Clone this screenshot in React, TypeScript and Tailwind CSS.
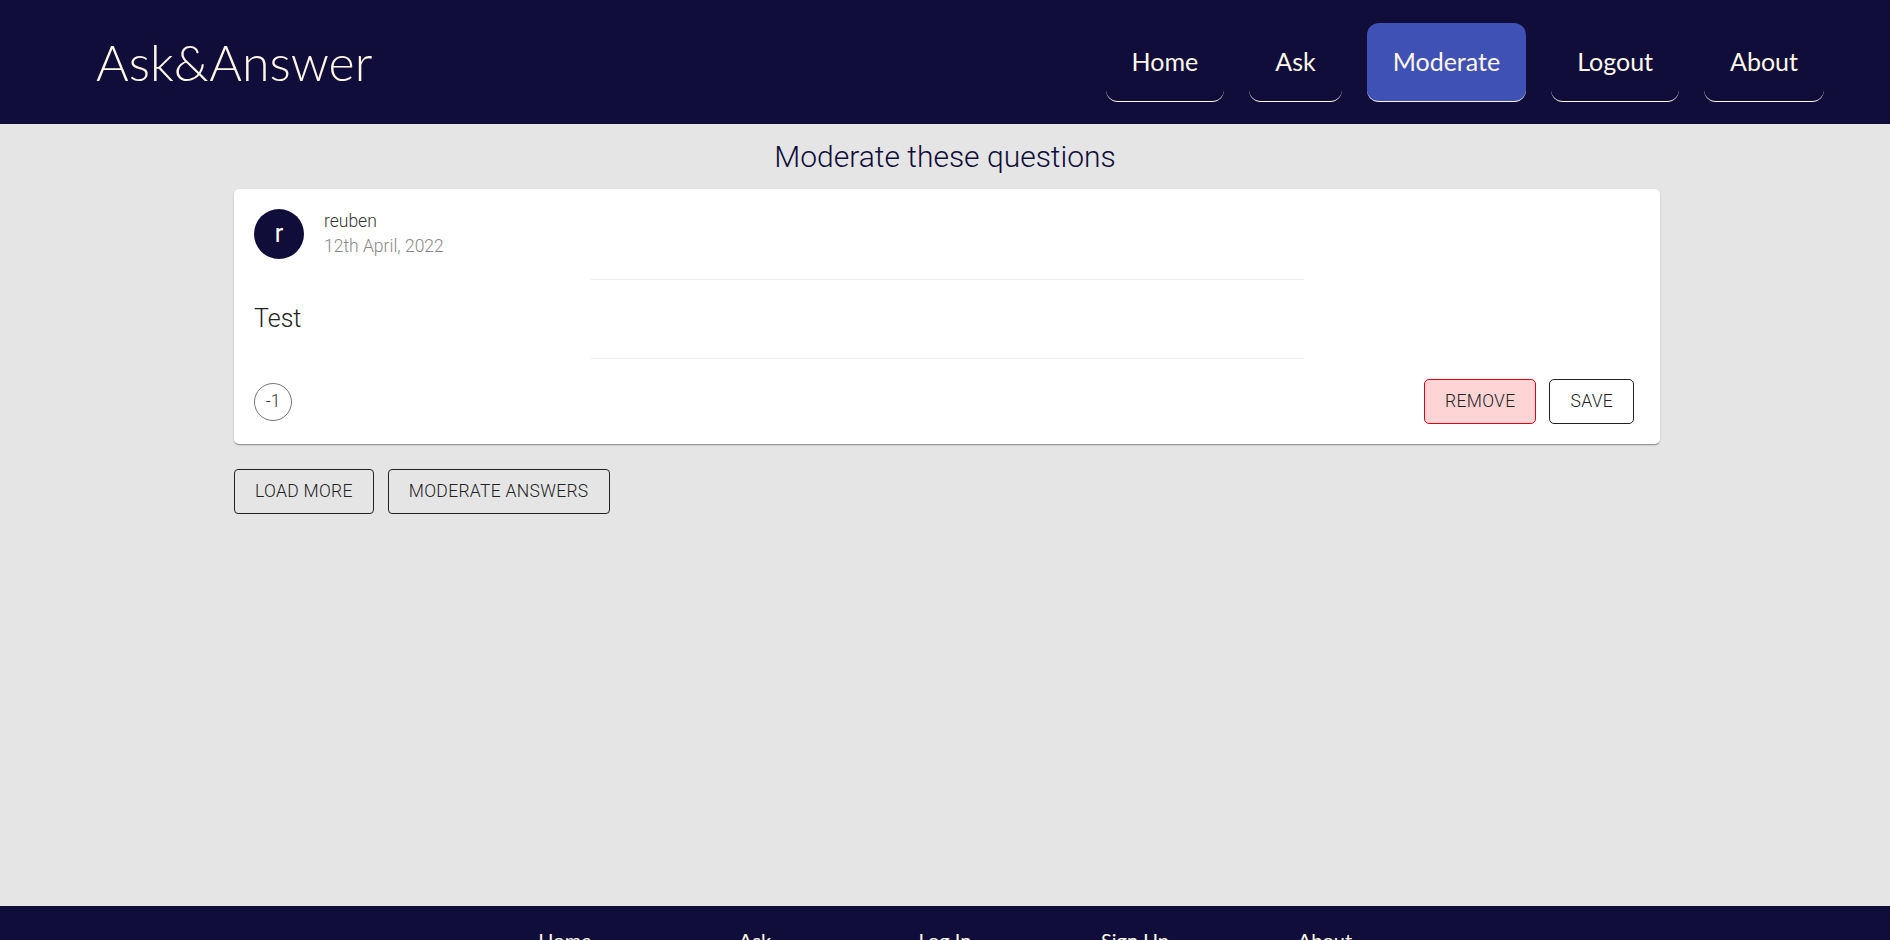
const navItems = ['Home', 'Ask', 'Moderate', 'Logout', 'About']
const footerItems = ['Home', 'Ask', 'Log In', 'Sign Up', 'About']

function Header() {
  return (
    <header className="h-[124px] bg-[#100d3a] flex items-center justify-between pl-[96px] pr-[66px]">
      <div className="text-[50px] font-light text-[#fff8e7] leading-none font-['Lato',sans-serif]">Ask&amp;Answer</div>
      <nav className="flex gap-[25px] mt-[1px]">
        {navItems.map((item) => (
          <a
            key={item}
            className={
              item === 'Moderate'
                ? 'h-[79px] px-[26px] flex items-center rounded-[12px] bg-[#3f51b5] border-b border-[#fff8e7] text-[25px] text-[#fff8e7] font-["Lato",sans-serif] cursor-pointer'
                : 'h-[79px] px-[26px] flex items-center rounded-[12px] border-b border-[#fff8e7] text-[25px] text-[#fff8e7] font-["Lato",sans-serif] cursor-pointer'
            }
          >
            {item}
          </a>
        ))}
      </nav>
    </header>
  )
}

function QuestionCard() {
  return (
    <div className="w-[1426px] ml-[234px] bg-white rounded-[5px] shadow-[0_2px_1px_-1px_rgba(0,0,0,0.2),0_1px_1px_0_rgba(0,0,0,0.14),0_1px_3px_0_rgba(0,0,0,0.12)]">
      <div className="flex items-center p-[20px] h-[90px]">
        <div className="w-[50px] h-[50px] rounded-full bg-[#100d3a] text-white flex items-center justify-center text-[25px] mr-[20px]">
          r
        </div>
        <div className="flex flex-col">
          <span className="text-[17.5px] leading-[25px] font-light text-[#333]">reuben</span>
          <span className="text-[17.5px] leading-[25px] font-light text-[#888]">12th April, 2022</span>
        </div>
      </div>
      <hr className="w-1/2 mx-auto border-0 border-t border-[#ececec]" />
      <div className="px-[20px] py-[19px]">
        <p className="text-[25px] leading-[40px] font-light text-[#222]">Test</p>
      </div>
      <hr className="w-1/2 mx-auto border-0 border-t border-[#ececec]" />
      <div className="flex items-center justify-between pl-[20px] pr-[26px] pt-[20px] pb-[20px]">
        <div className="w-[38px] h-[38px] rounded-full border border-[#777] flex items-center justify-center text-[17.5px] font-light text-[#333]">
          -1
        </div>
        <div className="flex gap-[13px]">
          <button className="h-[45px] px-[20px] rounded-[5px] border border-[#e0000f] bg-[#ffd4d4] text-[17.5px] font-light tracking-[0.3px] text-[#222] uppercase">
            Remove
          </button>
          <button className="h-[45px] px-[20px] rounded-[5px] border border-[#222] bg-white text-[17.5px] font-light tracking-[0.3px] text-[#222] uppercase">
            Save
          </button>
        </div>
      </div>
    </div>
  )
}

export default function App() {
  return (
    <div className="font-['Roboto',sans-serif]">
      <Header />
      <main className="h-[782px] bg-[#e5e5e5] pt-[13px]">
        <h1 className="text-center text-[30px] leading-[40px] font-light text-[#100d3a] mb-[12px]">
          Moderate these questions
        </h1>
        <QuestionCard />
        <div className="w-[1426px] ml-[234px] flex gap-[14px] mt-[25px]">
          <button className="h-[45px] px-[20px] rounded-[4px] border border-[#222] text-[17.5px] font-light tracking-[0.3px] text-[#222] uppercase">
            Load more
          </button>
          <button className="h-[45px] px-[20px] rounded-[4px] border border-[#222] text-[17.5px] font-light tracking-[0.3px] text-[#222] uppercase">
            Moderate answers
          </button>
        </div>
      </main>
      <footer className="h-[200px] bg-[#100d3a] pt-[20px]">
        <div className="flex justify-center">
          {footerItems.map((item) => (
            <a key={item} className="w-[190px] text-center text-[20px] leading-[28px] text-[#fff8e7] font-['Lato',sans-serif]">
              {item}
            </a>
          ))}
        </div>
      </footer>
    </div>
  )
}
